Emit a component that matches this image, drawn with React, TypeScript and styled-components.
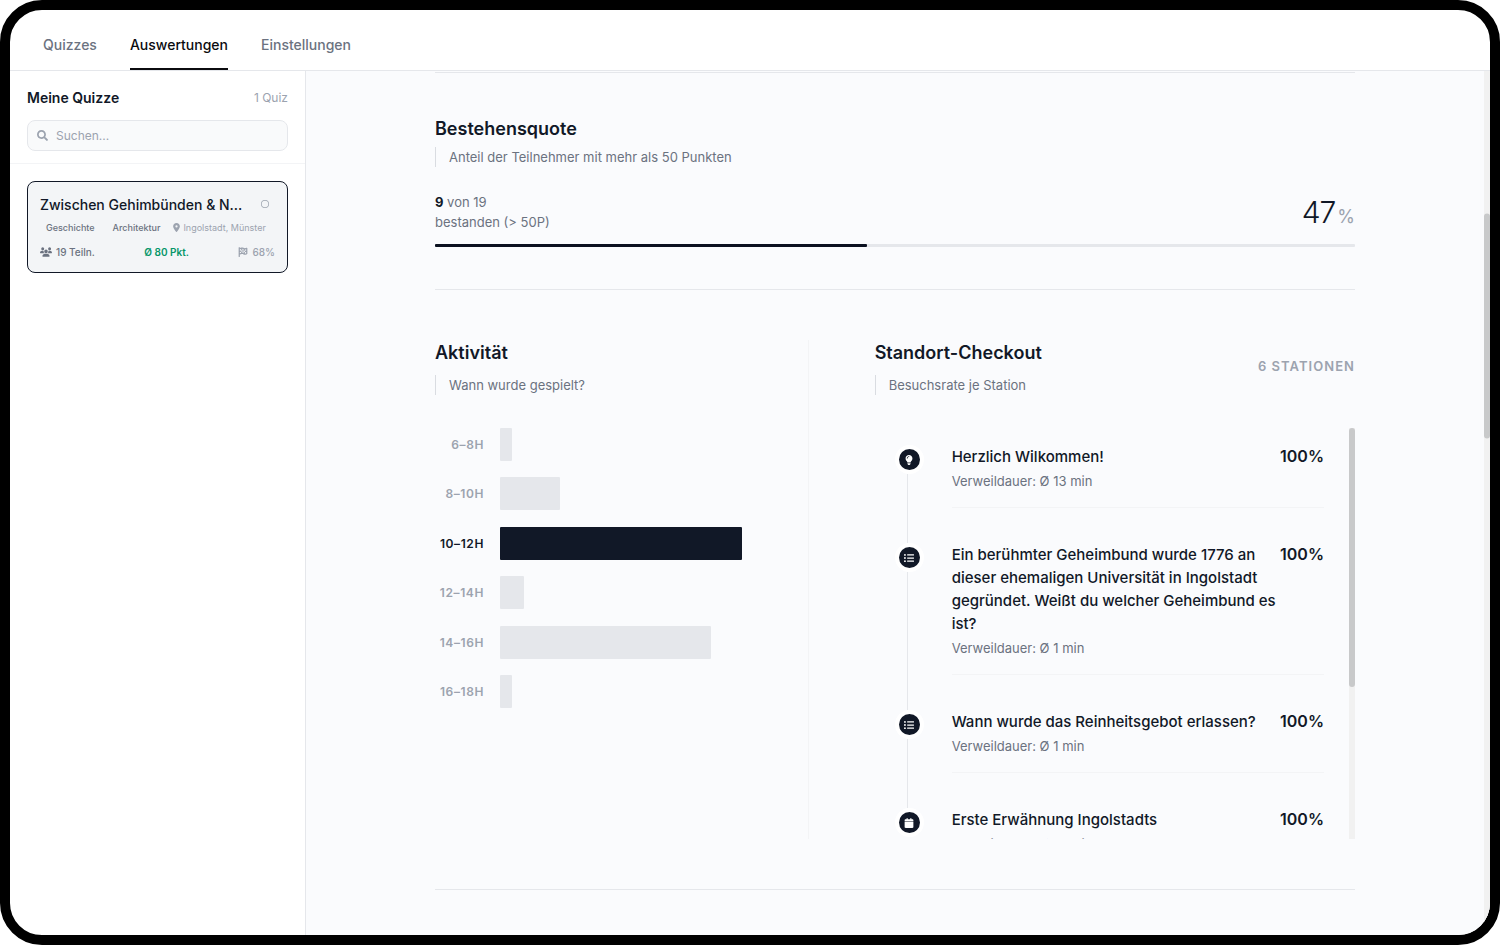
import React from "react";
import styled, { createGlobalStyle } from "styled-components";
import { FaCalendar, FaFlagCheckered, FaLightbulb, FaLocationDot, FaRegCircle, FaUsers } from "react-icons/fa6";
import { FaListUl, FaSearch } from "react-icons/fa";

const GlobalStyle = createGlobalStyle`
  * { box-sizing: border-box; }
  body { margin: 0; background: #fff; font-family: Inter, "Liberation Sans", sans-serif; color: #111827; }
  h1, h2, h3, p, ul, ol { margin: 0; padding: 0; }
  ul, ol { list-style: none; }
  button, input { font-family: inherit; }
`;

const Frame = styled.div`
  display: flex;
  flex-direction: column;
  height: 100vh;
  border: 10px solid #000;
  border-radius: 42px;
  overflow: hidden;
  background: #fff;
`;

const TabBar = styled.nav`
  display: flex;
  gap: 33px;
  flex: none;
  height: 61px;
  padding: 0 33px;
  border-bottom: 1px solid #e5e7eb;
`;

const Tab = styled.button<{ $active?: boolean }>`
  padding: 20px 0 9px;
  border: 0;
  border-bottom: 2px solid ${(p) => (p.$active ? "#0b0b0f" : "transparent")};
  background: none;
  font-size: 14px;
  font-weight: 500;
  color: ${(p) => (p.$active ? "#0b0b0f" : "#6b7280")};
`;

const Columns = styled.div`
  display: flex;
  flex: 1;
  min-height: 0;
`;

const Sidebar = styled.aside`
  flex: none;
  width: 296px;
  border-right: 1px solid #e5e7eb;
`;

const SidebarHead = styled.div`
  padding: 16px 17px 12px;
  border-bottom: 1px solid #f3f4f6;
`;

const TitleRow = styled.div`
  display: flex;
  justify-content: space-between;
  align-items: center;
  height: 21px;
  margin-bottom: 12px;
`;

const SidebarTitle = styled.h1`
  font-size: 14px;
  font-weight: 600;
`;

const Count = styled.span`
  font-size: 12px;
  color: #9ca3af;
`;

const SearchBox = styled.label`
  display: flex;
  align-items: center;
  gap: 8px;
  height: 31px;
  padding: 0 9px;
  border: 1px solid #e5e7eb;
  border-radius: 8px;
  background: #f9fafb;
  font-size: 11px;
  color: #9ca3af;
`;

const SearchInput = styled.input`
  flex: 1;
  min-width: 0;
  padding: 0;
  border: 0;
  outline: 0;
  background: none;
  font-size: 12px;
  &::placeholder { color: #9ca3af; }
`;

const QuizList = styled.ul`
  padding: 17px;
`;

const QuizCard = styled.li`
  display: flex;
  flex-direction: column;
  padding: 11px 12px 7px;
  border: 1px solid #111827;
  border-radius: 8px;
  background: #f3f5f7;
`;

const CardTop = styled.div`
  display: flex;
  align-items: center;
  gap: 16px;
  height: 22px;
  padding-right: 6px;
  font-size: 8px;
  color: #9ca3af;
`;

const CardTitle = styled.h2`
  flex: 1;
  min-width: 0;
  overflow: hidden;
  white-space: nowrap;
  text-overflow: ellipsis;
  font-size: 14px;
  font-weight: 500;
  color: #111827;
`;

const TagRow = styled.div`
  display: flex;
  align-items: center;
  gap: 6px;
  height: 24px;
  font-size: 9px;
  color: #9ca3af;
  white-space: nowrap;
`;

const Tag = styled.span`
  padding: 0 6px;
  font-weight: 500;
  color: #6b7280;
`;

const Place = styled.span`
  display: flex;
  align-items: center;
  gap: 2px;
`;

const StatRow = styled.div`
  display: flex;
  justify-content: space-between;
  align-items: center;
  height: 26px;
  font-size: 10px;
`;

const Stat = styled.span<{ $tone: string; $bold?: boolean }>`
  display: flex;
  align-items: center;
  gap: 4px;
  color: ${(p) => p.$tone};
  font-weight: ${(p) => (p.$bold ? 600 : 500)};
`;

const Main = styled.main`
  display: flex;
  flex: 1;
  min-width: 0;
  background: #fafbfd;
`;

const Scroller = styled.div`
  flex: 1;
  min-width: 0;
  padding: 1px 48px 0;
  overflow: hidden;
`;

const Content = styled.div`
  max-width: 920px;
  margin: 0 auto;
  border-top: 1px solid #e5e7eb;
`;

const Track = styled.div`
  flex: none;
  width: 6px;
  background: #f1f1f1;
`;

const Thumb = styled.div<{ $start: number; $size: number }>`
  height: ${(p) => p.$size}%;
  border-radius: 3px;
  background: #c8c9ca;
  transform: translateY(${(p) => (p.$start / p.$size) * 100}%);
`;

const Section = styled.section`
  border-bottom: 1px solid #e5e7eb;
`;

const QuoteSection = styled(Section)`
  padding: 43px 0 42px;
`;

const Heading = styled.h2`
  font-size: 18px;
  font-weight: 600;
  line-height: 26px;
`;

const Lead = styled.p<{ $gap: number }>`
  margin-top: ${(p) => p.$gap}px;
  padding-left: 13px;
  border-left: 1px solid #d9dce1;
  font-size: 13px;
  line-height: 20px;
  color: #6b7280;
`;

const QuoteRow = styled.div`
  display: flex;
  justify-content: space-between;
  align-items: flex-end;
  margin-top: 25px;
`;

const QuoteText = styled.p`
  font-size: 13px;
  line-height: 20px;
  color: #6b7280;
  strong { font-weight: 700; color: #111827; }
`;

const QuoteValue = styled.p`
  display: flex;
  align-items: baseline;
  gap: 2px;
  font-size: 30px;
  font-weight: 300;
  line-height: 30px;
  letter-spacing: -1px;
  small { font-size: 18px; font-weight: 400; letter-spacing: 0; color: #9ca3af; }
`;

const Meter = styled.div`
  height: 3px;
  margin-top: 12px;
  border-radius: 1px;
  background: #e5e7eb;
`;

const MeterFill = styled.div`
  height: 100%;
  border-radius: 1px;
  background: #0b1120;
`;

const SplitSection = styled(Section)`
  display: grid;
  grid-template-columns: 7fr 9fr;
  column-gap: 66px;
  padding: 50px 0;
`;

const Activity = styled.div`
  padding-right: 66px;
  border-right: 1px solid #f3f4f6;
`;

const Bars = styled.ul`
  display: grid;
  align-content: space-between;
  height: 280px;
  margin-top: 33px;
`;

const BarRow = styled.li`
  display: grid;
  grid-template-columns: 49px 1fr;
  column-gap: 16px;
  align-items: center;
`;

const BarLabel = styled.span<{ $strong?: boolean }>`
  text-align: right;
  font-size: 12px;
  font-weight: 600;
  letter-spacing: 0.05em;
  color: ${(p) => (p.$strong ? "#111827" : "#9ca3af")};
`;

const Bar = styled.div<{ $strong?: boolean }>`
  height: 33px;
  border-radius: 1px;
  background: ${(p) => (p.$strong ? "#111827" : "#e5e7eb")};
`;

const CheckoutHead = styled.div`
  display: flex;
  justify-content: space-between;
  align-items: center;
`;

const StationCount = styled.span`
  padding-bottom: 4px;
  font-size: 13px;
  font-weight: 600;
  letter-spacing: 0.08em;
  color: #9ca3af;
`;

const StationArea = styled.div`
  display: flex;
  gap: 25px;
  max-height: 411px;
  margin-top: 33px;
  overflow: hidden;
`;

const Stations = styled.ol`
  flex: 1;
  min-width: 0;
  padding: 17px 0 0 20px;
`;

const Rail = styled.div`
  display: flex;
  flex-direction: column;
  align-items: center;
  flex: none;
  width: 29px;
  &::after {
    content: "";
    flex: 1;
    width: 1px;
    margin-right: 3px;
    background: #e5e7eb;
  }
`;

const Station = styled.li`
  display: flex;
  gap: 28px;
  &:last-child ${Rail}::after { background: none; }
`;

const Dot = styled.span`
  display: flex;
  align-items: center;
  justify-content: center;
  width: 29px;
  height: 29px;
  border: 4px solid #fff;
  border-radius: 50%;
  background: #111827;
  color: #fff;
  font-size: 10px;
`;

const StationBody = styled.div`
  flex: 1;
  min-width: 0;
  margin-bottom: 35px;
  padding-bottom: 16px;
  border-bottom: 1px solid #f3f4f6;
`;

const StationHead = styled.div`
  display: flex;
  justify-content: space-between;
  line-height: 23px;
`;

const StationTitle = styled.h3`
  font-size: 15px;
  font-weight: 500;
`;

const Rate = styled.span`
  flex: none;
  font-size: 16px;
  font-weight: 600;
`;

const Dwell = styled.p`
  margin-top: 3px;
  font-size: 13px;
  line-height: 20px;
  color: #6b7280;
`;

const activity = [
  { label: "6–8H", share: 5 },
  { label: "8–10H", share: 25 },
  { label: "10–12H", share: 100 },
  { label: "12–14H", share: 10 },
  { label: "14–16H", share: 87.5 },
  { label: "16–18H", share: 5 },
];

const stations = [
  { icon: FaLightbulb, title: "Herzlich Wilkommen!", dwell: "13 min" },
  {
    icon: FaListUl,
    title:
      "Ein berühmter Geheimbund wurde 1776 an dieser ehemaligen Universität in Ingolstadt gegründet. Weißt du welcher Geheimbund es ist?",
    dwell: "1 min",
  },
  { icon: FaListUl, title: "Wann wurde das Reinheitsgebot erlassen?", dwell: "1 min" },
  { icon: FaCalendar, title: "Erste Erwähnung Ingolstadts", dwell: "13 min" },
];

export default function App() {
  return (
    <>
      <GlobalStyle />
      <Frame>
        <TabBar>
          <Tab>Quizzes</Tab>
          <Tab $active>Auswertungen</Tab>
          <Tab>Einstellungen</Tab>
        </TabBar>
        <Columns>
          <Sidebar>
            <SidebarHead>
              <TitleRow>
                <SidebarTitle>Meine Quizze</SidebarTitle>
                <Count>1 Quiz</Count>
              </TitleRow>
              <SearchBox>
                <FaSearch />
                <SearchInput type="text" placeholder="Suchen..." aria-label="Suchen" />
              </SearchBox>
            </SidebarHead>
            <QuizList>
              <QuizCard>
                <CardTop>
                  <CardTitle>Zwischen Gehimbünden &amp; N...</CardTitle>
                  <FaRegCircle />
                </CardTop>
                <TagRow>
                  <Tag>Geschichte</Tag>
                  <Tag>Architektur</Tag>
                  <Place>
                    <FaLocationDot />
                    Ingolstadt, Münster
                  </Place>
                </TagRow>
                <StatRow>
                  <Stat $tone="#6b7280">
                    <FaUsers size={12} />
                    19 Teiln.
                  </Stat>
                  <Stat $tone="#059669" $bold>
                    Ø 80 Pkt.
                  </Stat>
                  <Stat $tone="#9ca3af">
                    <FaFlagCheckered />
                    68%
                  </Stat>
                </StatRow>
              </QuizCard>
            </QuizList>
          </Sidebar>
          <Main>
            <Scroller>
              <Content>
                <QuoteSection>
                  <Heading>Bestehensquote</Heading>
                  <Lead $gap={5}>Anteil der Teilnehmer mit mehr als 50 Punkten</Lead>
                  <QuoteRow>
                    <QuoteText>
                      <strong>9</strong> von 19
                      <br />
                      bestanden (&gt; 50P)
                    </QuoteText>
                    <QuoteValue>
                      47<small>%</small>
                    </QuoteValue>
                  </QuoteRow>
                  <Meter>
                    <MeterFill style={{ width: "47%" }} />
                  </Meter>
                </QuoteSection>
                <SplitSection>
                  <Activity>
                    <Heading>Aktivität</Heading>
                    <Lead $gap={9}>Wann wurde gespielt?</Lead>
                    <Bars>
                      {activity.map((a) => (
                        <BarRow key={a.label}>
                          <BarLabel $strong={a.share === 100}>{a.label}</BarLabel>
                          <Bar $strong={a.share === 100} style={{ width: `${a.share}%` }} />
                        </BarRow>
                      ))}
                    </Bars>
                  </Activity>
                  <div>
                    <CheckoutHead>
                      <div>
                        <Heading>Standort-Checkout</Heading>
                        <Lead $gap={9}>Besuchsrate je Station</Lead>
                      </div>
                      <StationCount>6 STATIONEN</StationCount>
                    </CheckoutHead>
                    <StationArea>
                      <Stations>
                        {stations.map((s) => (
                          <Station key={s.title}>
                            <Rail>
                              <Dot>
                                <s.icon />
                              </Dot>
                            </Rail>
                            <StationBody>
                              <StationHead>
                                <StationTitle>{s.title}</StationTitle>
                                <Rate>100%</Rate>
                              </StationHead>
                              <Dwell>Verweildauer: Ø {s.dwell}</Dwell>
                            </StationBody>
                          </Station>
                        ))}
                      </Stations>
                      <Track>
                        <Thumb $start={0} $size={63} />
                      </Track>
                    </StationArea>
                  </div>
                </SplitSection>
              </Content>
            </Scroller>
            <Track>
              <Thumb $start={16.5} $size={26} />
            </Track>
          </Main>
        </Columns>
      </Frame>
    </>
  );
}
